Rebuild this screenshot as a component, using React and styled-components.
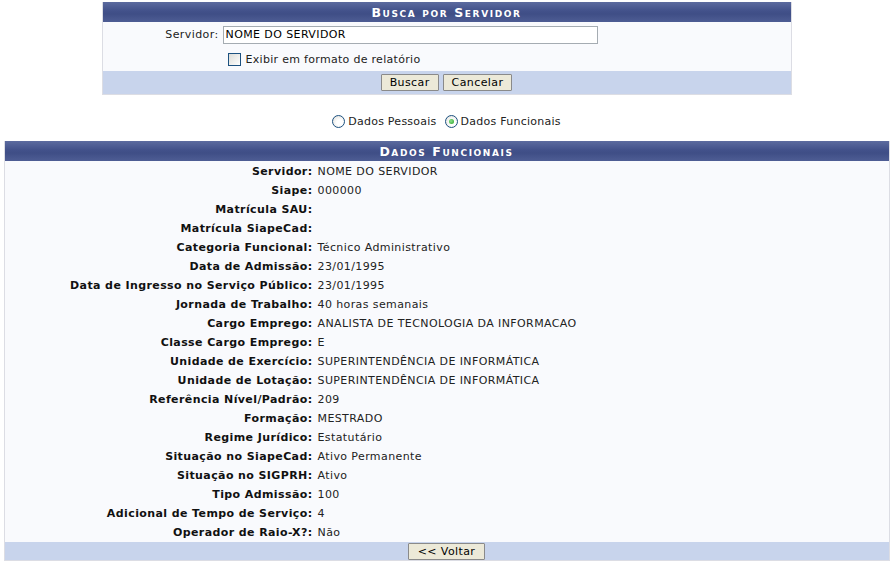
import React from "react";
import styled, { createGlobalStyle } from "styled-components";

const Global = createGlobalStyle`
  body {
    margin: 0;
    background: #fff;
    font-family: "DejaVu Sans", Verdana, sans-serif;
    font-size: 11px;
    letter-spacing: 0.4px;
    color: #222;
  }
`;

const Page = styled.div`
  display: flex;
  flex-direction: column;
  align-items: center;
  padding: 2px 3px 0 4px;
`;

const Panel = styled.div`
  width: ${(p) => p.width};
  border-left: 1px solid #dcdde4;
  border-right: 1px solid #dcdde4;
  border-bottom: 1px solid #dcdde4;
  background: #f9fafd;
`;

const Caption = styled.div`
  height: 20px;
  display: flex;
  align-items: center;
  justify-content: center;
  background: linear-gradient(#5c6b9f, #42518a 45%, #3f4e86 60%, #4e5d94);
  color: #fff;
  font-weight: bold;
  font-variant: small-caps;
  letter-spacing: 1.6px;
  font-size: 12.5px;
`;

const FormRow = styled.div`
  display: grid;
  grid-template-columns: 116px 1fr;
  column-gap: 4px;
  align-items: center;
  height: ${(p) => p.h || 22}px;
`;

const FormLabel = styled.label`
  text-align: right;
`;

const TextInput = styled.input`
  width: 375px;
  height: 18px;
  box-sizing: border-box;
  border: 1px solid #a5acb2;
  padding: 0 2px;
  font-family: inherit;
  font-size: 11px;
  letter-spacing: 0.4px;
  color: #000;
  background: #fff;
  outline: none;
`;

const CheckLine = styled.label`
  display: flex;
  align-items: center;
  gap: 5px;
  padding-left: 5px;
  letter-spacing: 0.3px;
`;

const Check = styled.span`
  width: 11px;
  height: 11px;
  border: 1px solid #1c5180;
  background: linear-gradient(135deg, #dcdcd7, #fff);
`;

const Footer = styled.div`
  height: ${(p) => p.h}px;
  background: #c8d4ec;
  display: flex;
  align-items: center;
  justify-content: center;
  gap: 4px;
`;

const Button = styled.button`
  height: 17px;
  padding: 0 ${(p) => p.pad || 8}px;
  background: #ece9d8;
  border: 1px solid #8a8a8a;
  border-radius: 1px;
  font-family: inherit;
  font-size: 11px;
  letter-spacing: 0.4px;
  color: #000;
  line-height: 15px;
`;

const RadioBar = styled.div`
  display: flex;
  justify-content: center;
  align-items: center;
  gap: 8px;
  height: 20px;
  margin: 16px 0 10px;
  letter-spacing: 0.25px;
`;

const RadioItem = styled.label`
  display: flex;
  align-items: center;
  gap: 3px;
`;

const Radio = styled.span`
  width: 11px;
  height: 11px;
  border-radius: 50%;
  border: 1px solid #1c5180;
  background: radial-gradient(circle at 60% 60%, #fff 30%, #dcdcd7 100%);
  display: flex;
  align-items: center;
  justify-content: center;
  &::after {
    content: "";
    width: 5px;
    height: 5px;
    border-radius: 50%;
    background: ${(p) => (p.checked ? "radial-gradient(circle at 40% 40%, #8fe08f, #21a121)" : "transparent")};
  }
`;

const InfoList = styled.div`
  padding-top: 1px;
`;

const InfoRow = styled.div`
  display: grid;
  grid-template-columns: 308px 1fr;
  column-gap: 5px;
  height: 19px;
  align-items: center;
`;

const Term = styled.div`
  text-align: right;
  font-weight: bold;
  color: #111;
`;

const Value = styled.div`
  color: #222;
`;

const dados = [
  ["Servidor:", "NOME DO SERVIDOR"],
  ["Siape:", "000000"],
  ["Matrícula SAU:", ""],
  ["Matrícula SiapeCad:", ""],
  ["Categoria Funcional:", "Técnico Administrativo"],
  ["Data de Admissão:", "23/01/1995"],
  ["Data de Ingresso no Serviço Público:", "23/01/1995"],
  ["Jornada de Trabalho:", "40 horas semanais"],
  ["Cargo Emprego:", "ANALISTA DE TECNOLOGIA DA INFORMACAO"],
  ["Classe Cargo Emprego:", "E"],
  ["Unidade de Exercício:", "SUPERINTENDÊNCIA DE INFORMÁTICA"],
  ["Unidade de Lotação:", "SUPERINTENDÊNCIA DE INFORMÁTICA"],
  ["Referência Nível/Padrão:", "209"],
  ["Formação:", "MESTRADO"],
  ["Regime Jurídico:", "Estatutário"],
  ["Situação no SiapeCad:", "Ativo Permanente"],
  ["Situação no SIGPRH:", "Ativo"],
  ["Tipo Admissão:", "100"],
  ["Adicional de Tempo de Serviço:", "4"],
  ["Operador de Raio-X?:", "Não"],
];

export default function App() {
  return (
    <Page>
      <Global />
      <Panel width="688px">
        <Caption>Busca por Servidor</Caption>
        <FormRow h={25}>
          <FormLabel>Servidor:</FormLabel>
          <TextInput defaultValue="NOME DO SERVIDOR" />
        </FormRow>
        <FormRow h={24}>
          <span />
          <CheckLine>
            <Check />
            Exibir em formato de relatório
          </CheckLine>
        </FormRow>
        <Footer h={23}>
          <Button>Buscar</Button>
          <Button>Cancelar</Button>
        </Footer>
      </Panel>

      <RadioBar>
        <RadioItem>
          <Radio />
          Dados Pessoais
        </RadioItem>
        <RadioItem>
          <Radio checked />
          Dados Funcionais
        </RadioItem>
      </RadioBar>

      <Panel width="884px">
        <Caption>Dados Funcionais</Caption>
        <InfoList>
          {dados.map(([t, v]) => (
            <InfoRow key={t}>
              <Term>{t}</Term>
              <Value>{v}</Value>
            </InfoRow>
          ))}
        </InfoList>
        <Footer h={18}>
          <Button pad={9}>&lt;&lt; Voltar</Button>
        </Footer>
      </Panel>
    </Page>
  );
}
